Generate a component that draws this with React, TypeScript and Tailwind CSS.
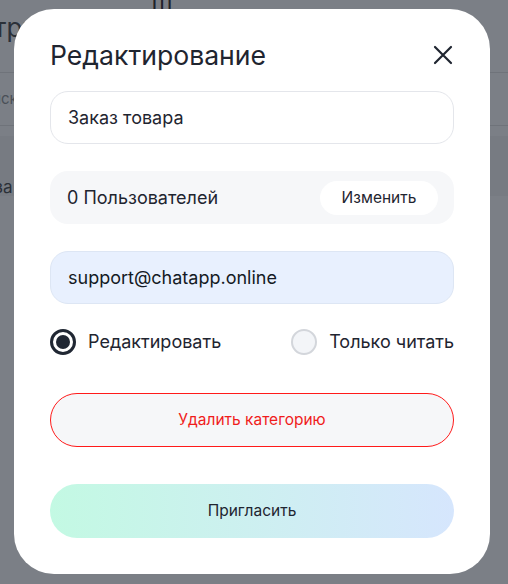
import React, { useState } from "react";

const font = { fontFamily: "Inter, 'Noto Sans', sans-serif" };

function Radio({ checked, label, onClick }: { checked: boolean; label: string; onClick: () => void }) {
  return (
    <button type="button" onClick={onClick} className="flex items-center gap-[12px]">
      {checked ? (
        <span className="flex h-[26px] w-[26px] items-center justify-center rounded-full border-[3px] border-[#202733] bg-white">
          <span className="h-[14px] w-[14px] rounded-full bg-[#202733]" />
        </span>
      ) : (
        <span className="h-[26px] w-[26px] rounded-full border-2 border-[#d3d6db] bg-[#f3f5f8]" />
      )}
      <span className="text-[18px] text-[#1f2530]">{label}</span>
    </button>
  );
}

export default function App() {
  const [mode, setMode] = useState<"edit" | "read">("edit");

  return (
    <div className="relative h-[584px] w-[508px] overflow-hidden bg-[#7b7f86]" style={font}>
      {/* dimmed page behind the dialog */}
      <div className="ml-[-72px] text-[#2b3038]">
        <div className="flex h-[73px] items-center border-b border-[#6f737a]">
          <span className="mt-[-18px] text-[26px]">Фильтры</span>
          <span className="ml-[110px] mt-[-66px] text-[22px] text-[#1f232a]">Ш</span>
        </div>
        <div className="flex h-[53px] items-center border-b border-[#6f737a] pl-[44px] text-[15px] text-[#4a4f57]">
          Поиск
        </div>
        <div className="mt-[10px] flex h-[60px] items-center bg-[#777b82] pl-[46px] pt-[44px] text-[17px]">
          База
        </div>
      </div>

      <div className="absolute left-[14px] top-[9px] flex w-[476px] flex-col rounded-[40px] bg-white px-[36px] pb-[36px] pt-[28px]">
        <div className="flex items-center justify-between">
          <h2 className="text-[26.6px] font-normal leading-[36px] text-[#1f2530]">Редактирование</h2>
          <button type="button" className="mr-[1px] text-[#1f2530]" aria-label="Закрыть">
            <svg width="20" height="20" viewBox="0 0 20 20" fill="none" stroke="currentColor" strokeWidth="2.2" strokeLinecap="round">
              <path d="M2 2L18 18M18 2L2 18" />
            </svg>
          </button>
        </div>

        <div className="mt-[18px] flex h-[53px] items-center rounded-[18px] border border-[#e4e6eb] bg-white px-[17px] text-[18px] text-[#1f2530]">
          Заказ товара
        </div>

        <div className="mt-[27px] flex h-[53px] items-center justify-between rounded-[18px] bg-[#f6f7f9] pl-[17px] pr-[16px]">
          <span className="text-[18px] text-[#1f2530]">0 Пользователей</span>
          <button type="button" className="flex h-[34px] w-[118px] items-center justify-center rounded-full bg-white text-[15.5px] text-[#1f2530]">
            Изменить
          </button>
        </div>

        <div className="mt-[27px] flex h-[53px] items-center rounded-[18px] border border-[#dde6f4] bg-[#e8f0fe] px-[17px] text-[18px] text-[#141a24]">
          support@chatapp.online
        </div>

        <div className="mt-[24px] flex items-center justify-between">
          <Radio checked={mode === "edit"} label="Редактировать" onClick={() => setMode("edit")} />
          <Radio checked={mode === "read"} label="Только читать" onClick={() => setMode("read")} />
        </div>

        <button
          type="button"
          className="mt-[38px] flex h-[54px] items-center justify-center rounded-full border border-[#ff1a1a] bg-[#f6f7f9] text-[15.5px] text-[#f01c1c]"
        >
          Удалить категорию
        </button>

        <button
          type="button"
          className="mt-[37px] flex h-[54px] items-center justify-center rounded-full bg-gradient-to-r from-[#c3f9e3] to-[#d6e6fd] text-[15.5px] text-[#1f2530]"
        >
          Пригласить
        </button>
      </div>
    </div>
  );
}
